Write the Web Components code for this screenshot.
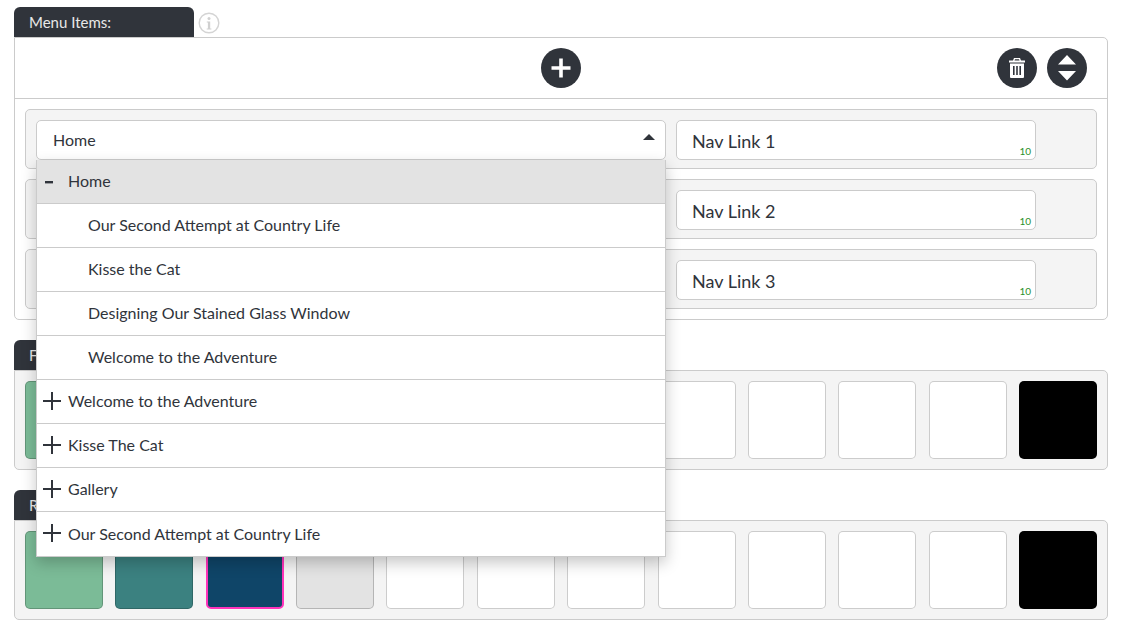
<!DOCTYPE html>
<html>
<head>
<meta charset="utf-8">
<title>Menu Items</title>
<style>
  html, body { margin: 0; background: #fff; }
  body { padding: 7px 31px 14px 14px; font-family: Lato, "Open Sans", sans-serif; color: #30343b; }
</style>
</head>
<body>
  <menu-section label="Menu Items:" info>
    <menu-toolbar slot="top"></menu-toolbar>
    <nav-row link="Nav Link 1">
      <drop-select value="Home" open>
        <menu-item kind="open" label="Home"></menu-item>
        <menu-item kind="child" label="Our Second Attempt at Country Life"></menu-item>
        <menu-item kind="child" label="Kisse the Cat"></menu-item>
        <menu-item kind="child" label="Designing Our Stained Glass Window"></menu-item>
        <menu-item kind="child" label="Welcome to the Adventure"></menu-item>
        <menu-item kind="closed" label="Welcome to the Adventure"></menu-item>
        <menu-item kind="closed" label="Kisse The Cat"></menu-item>
        <menu-item kind="closed" label="Gallery"></menu-item>
        <menu-item kind="closed" label="Our Second Attempt at Country Life"></menu-item>
      </drop-select>
    </nav-row>
    <nav-row link="Nav Link 2"><drop-select></drop-select></nav-row>
    <nav-row link="Nav Link 3"><drop-select></drop-select></nav-row>
  </menu-section>

  <menu-section label="F">
    <swatch-row colors="#7bbb97,#fff,#fff,#fff,#fff,#fff,#fff,#fff,#fff,#fff,#fff,#000"></swatch-row>
  </menu-section>

  <menu-section label="R">
    <swatch-row colors="#7bbb97,#3b8180,#0f4568,#e3e3e3,#fff,#fff,#fff,#fff,#fff,#fff,#fff,#000" selected="2"></swatch-row>
  </menu-section>

<script>
  class MenuSection extends HTMLElement {
    constructor() {
      super();
      this.attachShadow({ mode: 'open' });
      const info = this.hasAttribute('info') ? `
        <svg class="info" width="22" height="22" viewBox="0 0 22 22">
          <circle cx="11" cy="11" r="9.8" fill="#fff" stroke="#d4d4d4" stroke-width="1.4"/>
          <circle cx="11" cy="6.6" r="1.5" fill="#d0d0d0"/>
          <path d="M8.8 9.4h3.4v7h1.2v1.1H8.7v-1.1h1.2v-5.9H8.8z" fill="#d0d0d0"/>
        </svg>` : '';
      this.shadowRoot.innerHTML = `
        <style>
          :host { display: block; margin-bottom: 20px; }
          .head { display: flex; align-items: flex-start; height: 30px; }
          .tab {
            width: 165px; height: 30px; padding-left: 15px; line-height: 31px;
            background: #30343b; color: #e8e8e8; font-size: 15px;
            border-radius: 6px 6px 0 0;
          }
          .info { margin: 5px 0 0 4px; }
          .panel {
            border: 1px solid #cbcbcb; border-radius: 0 5px 5px 5px;
            background: #f4f4f4;
          }
          .panel.plain { background: #fff; }
          .body { padding: 10px; display: flex; flex-direction: column; gap: 10px; }
        </style>
        <div class="head"><div class="tab">${this.getAttribute('label')}</div>${info}</div>
        <div class="panel ${info ? 'plain' : ''}">
          <slot name="top"></slot>
          <div class="body"><slot></slot></div>
        </div>`;
    }
  }

  class MenuToolbar extends HTMLElement {
    constructor() {
      super();
      this.attachShadow({ mode: 'open' });
      this.shadowRoot.innerHTML = `
        <style>
          :host {
            display: grid; grid-template-columns: 1fr auto 1fr; align-items: center;
            height: 60px; border-bottom: 1px solid #cbcbcb;
          }
          .c { grid-column: 2; display: flex; }
          .r { grid-column: 3; display: flex; justify-content: flex-end; gap: 10px; padding-right: 20px; }
          button {
            width: 40px; height: 40px; padding: 0; border: 0; border-radius: 50%;
            background: #30343b; display: flex; align-items: center; justify-content: center;
          }
        </style>
        <div class="c">
          <button><svg width="20" height="20" viewBox="0 0 20 20"><path d="M8.2 0.5h3.6v7.7h7.7v3.6h-7.7v7.7H8.2v-7.7H0.5V8.2h7.7z" fill="#fff"/></svg></button>
        </div>
        <div class="r">
          <button><svg width="16" height="20" viewBox="0 0 16 20"><path fill="#fff" fill-rule="evenodd" d="M5 0h6l1 2.6h4v1.8H0V2.6h4zM6 1.2l-.5 1.4h5L10 1.2zM1 5.4h14V19a1 1 0 0 1-1 1H2a1 1 0 0 1-1-1zM4 8v9h1.6V8zM7.2 8v9h1.6V8zM10.4 8v9H12V8z"/></svg></button>
          <button><svg width="20" height="26" viewBox="0 0 20 26"><path d="M10 0l9 9.5H1zM1 16h18l-9 9.5z" fill="#fff"/></svg></button>
        </div>`;
    }
  }

  class NavRow extends HTMLElement {
    constructor() {
      super();
      this.attachShadow({ mode: 'open' });
      this.shadowRoot.innerHTML = `
        <style>
          :host {
            display: flex; gap: 10px; height: 38px; padding: 10px;
            background: #f4f4f4; border: 1px solid #cbcbcb; border-radius: 5px;
          }
          .link {
            position: relative; box-sizing: border-box; width: 360px; height: 40px;
            padding-left: 15px; line-height: 40px; font-size: 18px;
            background: #fff; border: 1px solid #cbcbcb; border-radius: 5px;
          }
          .count { position: absolute; right: 4px; bottom: 2px; font-size: 10px; line-height: 12px; color: #2a8f2a; }
        </style>
        <slot></slot>
        <div class="link">${this.getAttribute('link')}<span class="count">10</span></div>`;
    }
  }

  class DropSelect extends HTMLElement {
    constructor() {
      super();
      this.attachShadow({ mode: 'open' });
      const open = this.hasAttribute('open');
      this.shadowRoot.innerHTML = `
        <style>
          :host { display: block; position: relative; width: 630px; height: 40px; flex: none; }
          .box {
            box-sizing: border-box; height: 40px; padding-left: 16px; line-height: 38px; font-size: 16px;
            background: #fff; border: 1px solid #cbcbcb; border-radius: 5px;
          }
          .caret { position: absolute; right: 11px; top: 14px; }
          .list {
            position: absolute; left: 0; right: 0; top: 40px; z-index: 5; background: #fff;
            border: 1px solid #cbcbcb; border-top: 0; box-shadow: 0 6px 14px rgba(0,0,0,.22);
          }
        </style>
        <div class="box">${this.getAttribute('value') || ''}</div>
        <svg class="caret" width="12" height="6" viewBox="0 0 12 6"><path d="M6 0l6 6H0z" fill="#30343b"/></svg>
        ${open ? '<div class="list"><slot></slot></div>' : ''}`;
    }
  }

  class MenuItem extends HTMLElement {
    constructor() {
      super();
      this.attachShadow({ mode: 'open' });
      const kind = this.getAttribute('kind');
      let icon = '';
      if (kind === 'closed') icon = '<svg width="18" height="18" viewBox="0 0 18 18"><path d="M8 0h2v8h8v2h-8v8H8v-8H0V8h8z" fill="#30343b"/></svg>';
      if (kind === 'open') icon = '<svg width="18" height="18" viewBox="0 0 18 18"><path d="M2 9h8v2.4H2z" fill="#30343b"/></svg>';
      this.shadowRoot.innerHTML = `
        <style>
          :host {
            display: flex; align-items: center; box-sizing: border-box; height: 44px;
            padding-left: 6px; font-size: 16px; border-bottom: 1px solid #cbcbcb;
            padding-bottom: 2px;
          }
          :host(:last-child) { border-bottom: 0; }
          :host([kind="open"]) { background: #e3e3e3; }
          :host([kind="child"]) { padding-left: 51px; }
          svg { margin-right: 7px; flex: none; }
        </style>
        ${icon}<span>${this.getAttribute('label')}</span>`;
    }
  }

  class SwatchRow extends HTMLElement {
    constructor() {
      super();
      this.attachShadow({ mode: 'open' });
      const sel = this.getAttribute('selected');
      const cells = this.getAttribute('colors').split(',').map((c, i) =>
        `<div class="sw ${String(i) === sel ? 'sel' : ''}" style="background:${c}"></div>`).join('');
      this.shadowRoot.innerHTML = `
        <style>
          :host { display: flex; justify-content: space-between; }
          .sw {
            box-sizing: border-box; width: 78px; height: 78px;
            border: 1px solid rgba(0,0,0,.2); border-radius: 5px;
          }
          .sw.sel { border: 2px solid #ff33bb; }
        </style>
        ${cells}`;
    }
  }

  customElements.define('menu-section', MenuSection);
  customElements.define('menu-toolbar', MenuToolbar);
  customElements.define('nav-row', NavRow);
  customElements.define('drop-select', DropSelect);
  customElements.define('menu-item', MenuItem);
  customElements.define('swatch-row', SwatchRow);
</script>
</body>
</html>
